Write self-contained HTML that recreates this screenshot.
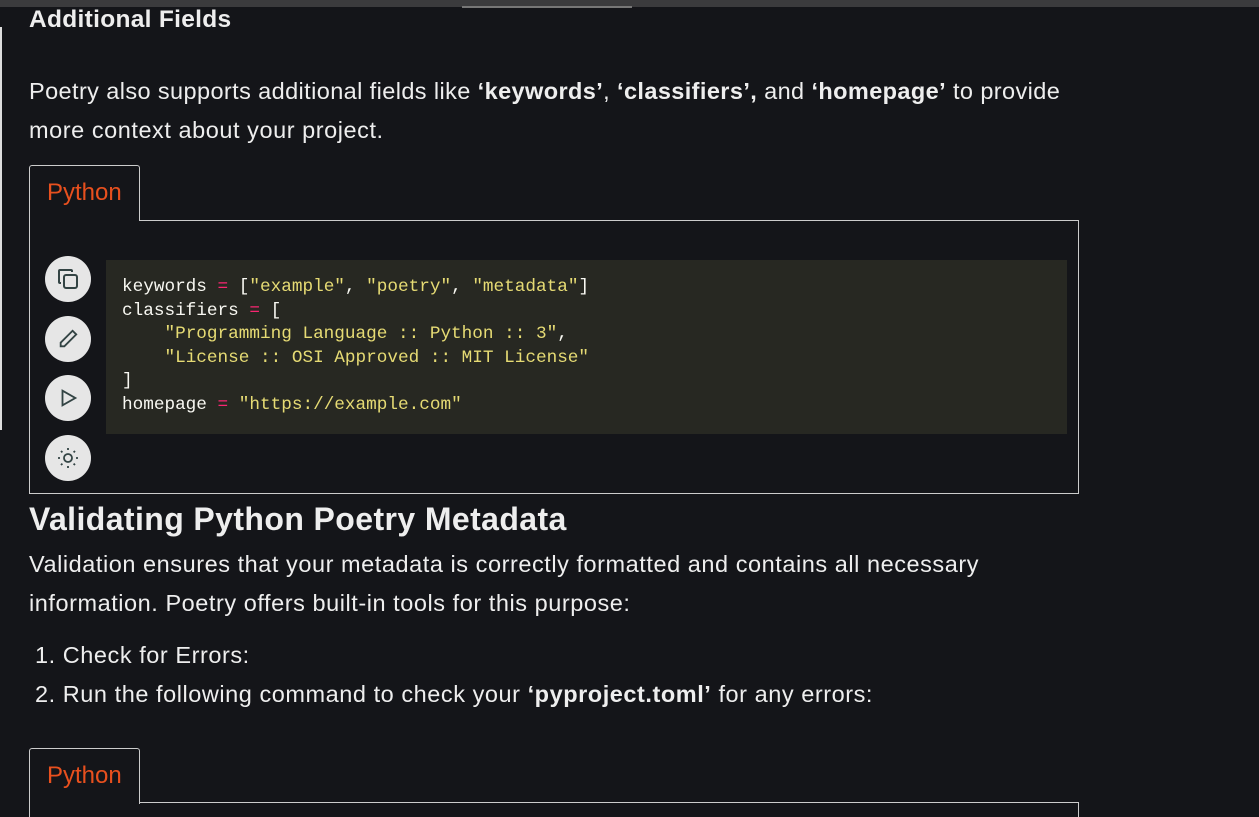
<!DOCTYPE html>
<html><head><meta charset="utf-8"><style>
*{margin:0;padding:0;box-sizing:border-box}
html,body{width:1259px;height:817px;overflow:hidden}
body{background:#141519;color:#eee;font-family:"Liberation Sans",sans-serif;position:relative}
.topbar{position:absolute;left:0;top:0;width:1259px;height:7px;background:#3b3b3d}
.topseg{position:absolute;left:462px;top:6px;width:170px;height:2px;background:#777}
.lline{position:absolute;left:0;top:27px;width:2px;height:403px;background:#ddd}
.t{position:absolute;left:29px;white-space:nowrap}
h3{position:absolute;left:29px;top:6px;font-size:24.5px;font-weight:bold;letter-spacing:0.3px}
h2{position:absolute;left:29px;top:501px;font-size:32px;font-weight:bold;letter-spacing:0.4px}
p{font-size:23.5px;letter-spacing:0.55px}
.tab{position:absolute;left:29px;width:111px;height:56px;border:1px solid #ccc;border-bottom:none;border-radius:3px 3px 0 0;color:#e8501e;font-size:24px;padding:13px 0 0 17px;background:#141519;z-index:2}
.box{position:absolute;left:29px;width:1050px;border:1px solid #ccc}
.code{position:absolute;left:106px;top:260px;width:961px;height:174px;background:#272822;font-family:"Liberation Mono",monospace;font-size:17.7px;line-height:23.6px;padding:16px 0 0 16px;white-space:pre;color:#f8f8f2}
.s{color:#e6db74}.o{color:#f92672}
.btn{position:absolute;left:45px;width:46px;height:46px;border-radius:50%;background:#e6e6e6;display:flex;align-items:center;justify-content:center}
</style></head><body>
<div class="topbar"></div><div class="topseg"></div><div class="lline"></div>
<h3>Additional Fields</h3>
<p class="t" style="top:78px;letter-spacing:0.4px">Poetry also supports additional fields like <b>‘keywords’</b>, <b>‘classifiers’,</b> and <b>‘homepage’</b> to provide</p>
<p class="t" style="top:117px">more context about your project.</p>
<div class="tab" style="top:165px">Python</div>
<div class="box" style="top:220px;height:274px"></div>
<div class="code">keywords <span class="o">=</span> [<span class="s">"example"</span>, <span class="s">"poetry"</span>, <span class="s">"metadata"</span>]
classifiers <span class="o">=</span> [
    <span class="s">"Programming Language :: Python :: 3"</span>,
    <span class="s">"License :: OSI Approved :: MIT License"</span>
]
homepage <span class="o">=</span> <span class="s">"https://example.com"</span></div>
<div class="btn" style="top:256px"><svg width="24" height="24" viewBox="0 0 24 24" fill="none" stroke="#344" stroke-width="2"><rect x="8" y="8" width="13" height="13" rx="2"/><path d="M5 16H4a1 1 0 0 1-1-1V4a1 1 0 0 1 1-1h11a1 1 0 0 1 1 1v1"/></svg></div>
<div class="btn" style="top:316px"><svg width="22" height="22" viewBox="0 0 24 24" fill="none" stroke="#344" stroke-width="2"><path d="M17 3l4 4L8 20H4v-4z"/></svg></div>
<div class="btn" style="top:375px"><svg width="22" height="22" viewBox="0 0 24 24" fill="none" stroke="#344" stroke-width="2"><path d="M6 4l14 8-14 8z"/></svg></div>
<div class="btn" style="top:435px"><svg width="24" height="24" viewBox="0 0 24 24" fill="none" stroke="#344" stroke-width="1.8"><circle cx="12" cy="12" r="4"/><path d="M12 2v2M12 20v2M2 12h2M20 12h2M5 5l1.4 1.4M17.6 17.6L19 19M5 19l1.4-1.4M17.6 6.4L19 5"/></svg></div>
<h2>Validating Python Poetry Metadata</h2>
<p class="t" style="top:551px">Validation ensures that your metadata is correctly formatted and contains all necessary</p>
<p class="t" style="top:590px">information. Poetry offers built-in tools for this purpose:</p>
<p class="t" style="top:642px;left:35px">1. Check for Errors:</p>
<p class="t" style="top:681px;left:35px">2. Run the following command to check your <b>‘pyproject.toml’</b> for any errors:</p>
<div class="tab" style="top:748px">Python</div>
<div class="box" style="top:802px;height:40px"></div>
</body></html>
